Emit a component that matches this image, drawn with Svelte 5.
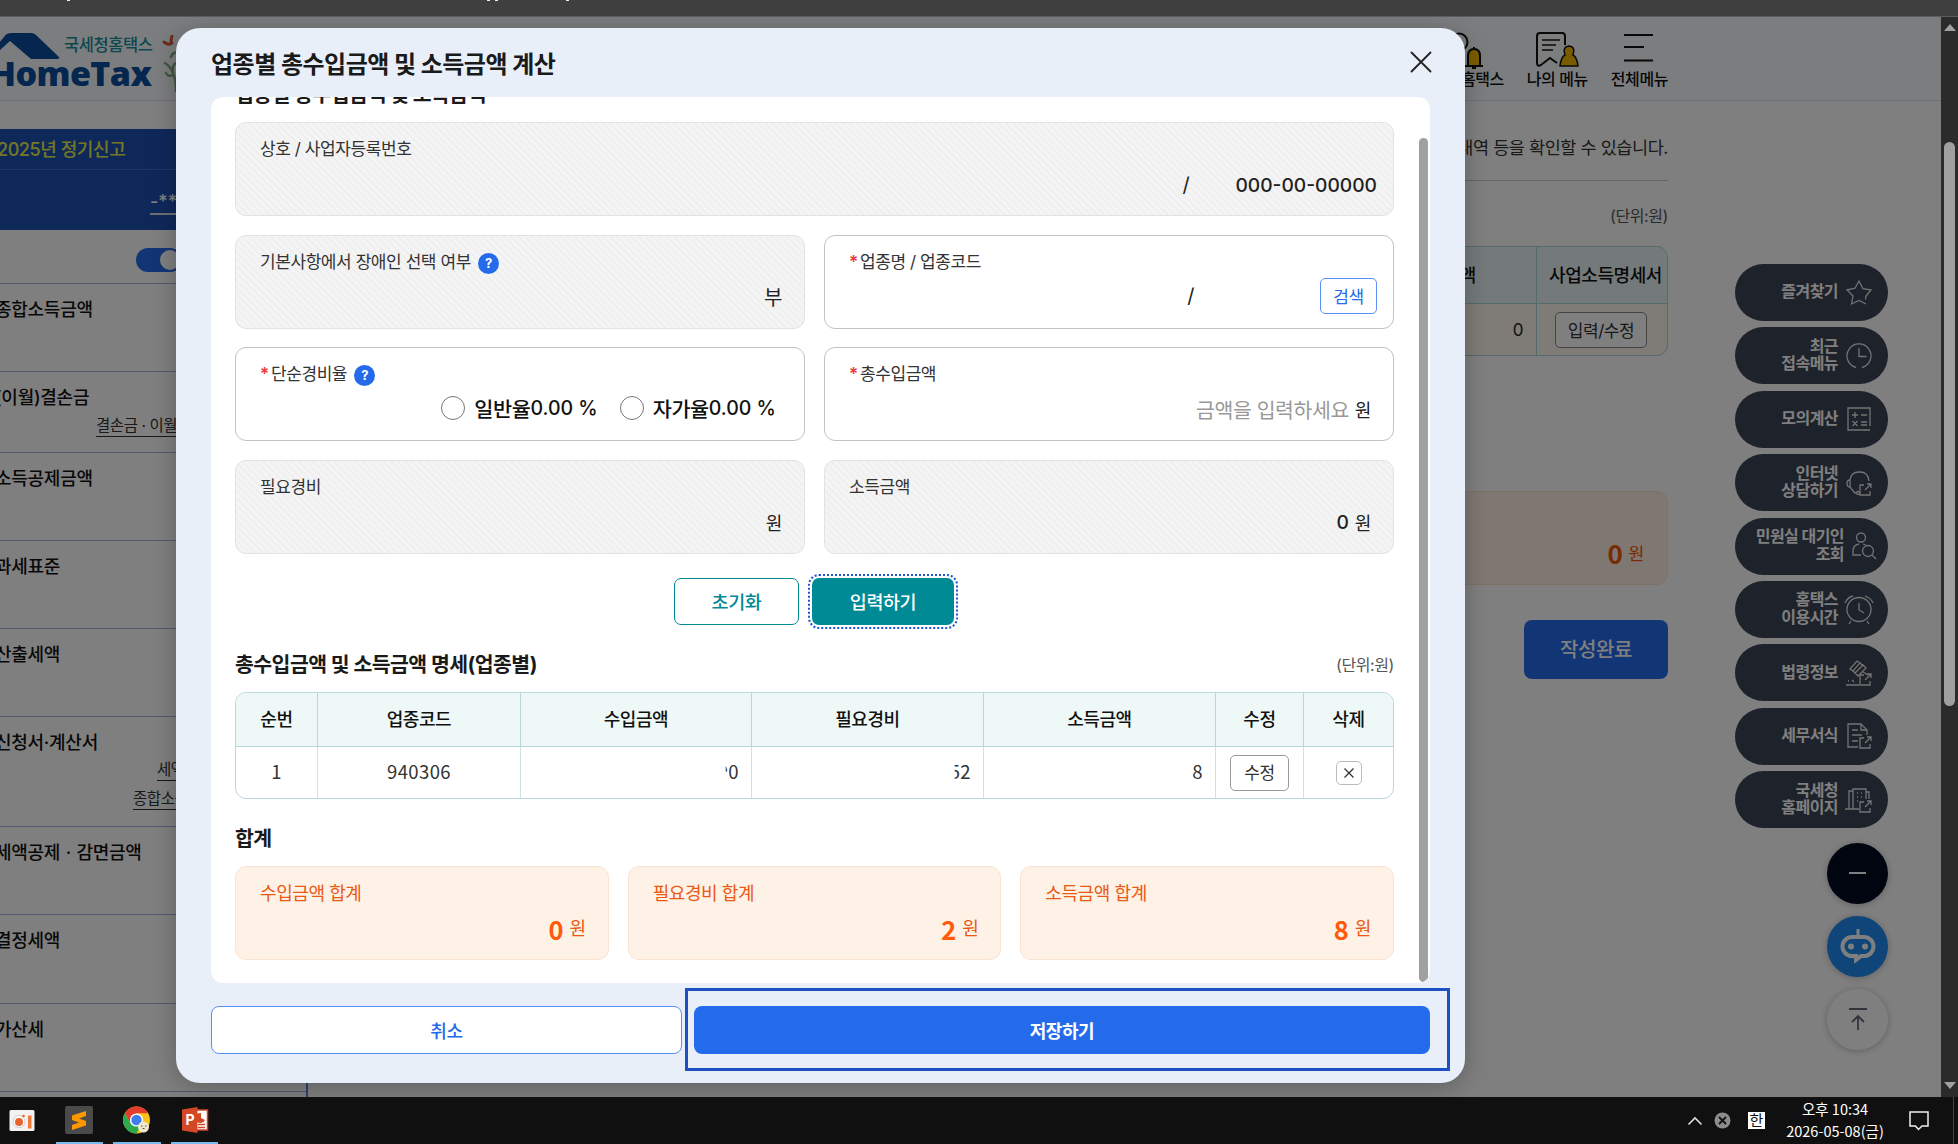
<script>
  const side = [
    { t: '종합소득금액', subs: [] },
    { t: '(이월)결손금', subs: ['결손금 · 이월결손금'] },
    { t: '소득공제금액', subs: [] },
    { t: '과세표준', subs: [] },
    { t: '산출세액', subs: [] },
    { t: '신청서·계산서', subs: ['세액감면신청서', '종합소득세 계산서'] },
    { t: '세액공제 · 감면금액', subs: [] },
    { t: '결정세액', subs: [] },
    { t: '가산세', subs: [] },
    { t: '', subs: [] }
  ];
  const quick = [
    ['즐겨찾기', 'star'],
    ['최근\n접속메뉴', 'recent'],
    ['모의계산', 'calc'],
    ['인터넷\n상담하기', 'head'],
    ['민원실 대기인\n조회', 'person'],
    ['홈택스\n이용시간', 'alarm'],
    ['법령정보', 'gavel'],
    ['세무서식', 'doc'],
    ['국세청\n홈페이지', 'bldg']
  ];
  const heads = ['순번', '업종코드', '수입금액', '필요경비', '소득금액', '수정', '삭제'];
  const sums = [
    ['수입금액 합계', '0'],
    ['필요경비 합계', '2'],
    ['소득금액 합계', '8']
  ];
</script>

{#snippet link()}
  <path d="M20 17h-4v10h10v-4M21 22l6-6M23 16h4v4" />
{/snippet}

{#snippet help()}
  <span class="help">?</span>
{/snippet}

<div class="screen">
  <div class="topbar"><i class="f1"></i><i class="f2"></i><i class="f3"></i><i class="f4"></i></div>
  <div class="view">
    <div class="page">
      <header class="gnb">
        <div class="logo">
          <svg class="roof" width="62" height="27" viewBox="0 0 62 27"><path d="M0 10 7 1.500Q9 0 12 0H32Q35 0 37 2L60 24Q61 26 58 26H32L11 8 0 18z" fill="#0a4d9c" /></svg>
          <span class="nts">국세청홈택스</span>
          <span class="ht">HomeTax</span>
          <svg class="leaf" width="20" height="60" viewBox="0 0 20 60"><g fill="none" stroke-linecap="round"><path d="M2 7q5 4 8 1M9 8q0-5 1-7" stroke="#d8593a" stroke-width="3" /><path d="M14 56Q14 35 3 28M12 40q-7 2-8-2M11 36q-1-6 3-8M9 22q2-6 8-4" stroke="#7fae83" stroke-width="2.500" /></g></svg>
        </div>
        <nav class="gmenu">
          <div class="gm g1">
            <svg width="40" height="40" viewBox="0 0 40 40" fill="none" stroke="#111" stroke-width="2"><circle cx="10" cy="10" r="8.500" /><path d="M19 34V24q0-7 6-7t6 7v10z" fill="#f5b800" /><path d="M16 34h18M23 36h4M25 17v-2" /></svg>
            <span>My홈택스</span>
          </div>
          <div class="gm g2">
            <svg width="46" height="40" viewBox="0 0 46 40" fill="none" stroke="#111" stroke-width="2"><path d="M31 13V4q0-3-3-3H6Q3 1 3 4v27q0 4 4 2l9-7 7 5" /><path d="M8 8h18M8 13h14M8 18h11" stroke-width="1.600" /><path d="M31 23q-3-8 4-9 7 1 4 9 4 2 5 11H26q1-9 5-11z" fill="#f5b800" stroke-width="1.500" /></svg>
            <span>나의 메뉴</span>
          </div>
          <div class="gm g3">
            <svg width="30" height="40" viewBox="0 0 30 40" stroke="#111" stroke-width="2.200"><path d="M0 3h29M0 15h20M0 28.500h29" /></svg>
            <span>전체메뉴</span>
          </div>
        </nav>
      </header>

      <div class="body">
        <aside>
          <div class="s-title">2025년 정기신고</div>
          <div class="s-user"><span>-*******</span></div>
          <div class="s-toggle"><span><i></i></span></div>
          {#each side as s, i}
            <div class="s-item s{i}">
              <b>{s.t}</b>
              {#each s.subs as u}<em>{u}</em>{/each}
            </div>
          {/each}
        </aside>
        <main>
          <p class="desc">신고내역 등을 확인할 수 있습니다.</p>
          <p class="unit">(단위:원)</p>
          <div class="ptable">
            <div class="ph"><span>소득금액</span><span>사업소득명세서</span></div>
            <div class="pr"><span>0</span><span><button>입력/수정</button></span></div>
          </div>
          <div class="ptotal"><b>0</b><span>원</span></div>
          <button class="done">작성완료</button>
        </main>
      </div>

      <div class="quick">
        {#each quick as [t, k]}
          <div class="pill {k}">
            <span>{t}</span>
            <svg width="30" height="30" viewBox="0 0 30 30" fill="none" stroke="#e6e6e6" stroke-width="1.300">
              {#if k === 'star'}
                <path d="M21.500 21.500 22 18l5-6-8-1.300L15 3l-4 7.200L3 12l6 6-1.500 8L15 22.500l7 3.500" />
              {:else if k === 'recent'}
                <path d="M12 26.500A12 12 0 1 1 18 26.500M15 7v8.500h7.500" />
              {:else if k === 'calc'}
                <path d="M26 22V4H4v22h22M8 11h6M11 8v6M17 11h6M8.500 17l5 5M13.500 17l-5 5M17 18h6M17 21h6" />
              {:else if k === 'head'}
                <path d="M6 12q1-8 9-8h1q8 0 9 9M6 12v7q-3 0-3-3.500T6 12zM6 19l5 6h2" /><circle cx="14" cy="25" r="1.500" />{@render link()}
              {:else if k === 'person'}
                <circle cx="14" cy="6.500" r="4.500" /><path d="M14 24H6v-4q0-6 6-7M16 13l3 1" /><circle cx="21" cy="20" r="5.500" /><path d="m25 24 4 4" />
              {:else if k === 'alarm'}
                <circle cx="15" cy="15.500" r="12" /><path d="M15 9v7l5 3M1 9Q4 3 9 2M21 2q6 2 8 7M7 27l-2 3M23 27l2 3" />
              {:else if k === 'gavel'}
                <path d="m6 11 7-8 3 2-7 8zM11 15l8-8 3 3-8 8zM9 13l2 2M16 5l3 3M19 14l5 3M8 22l2 2M4 23h1M2 27h13" />{@render link()}
              {:else if k === 'doc'}
                <path d="M14 26H4V3h13l6 6v5M17 3v6h6M8 9h6M8 14h10M8 20h6" />{@render link()}
              {:else}
                <path d="M1 24h14M5 24V6h4M9 24V4h13v10M22 7h3v7M13 8h1M17 8h1M13 12h1M17 12h1M13 16h1" />{@render link()}
              {/if}
            </svg>
          </div>
        {/each}
        <div class="round dark"><svg width="18" height="4"><path d="M0 2h17" stroke="#fff" stroke-width="2" /></svg></div>
        <div class="round blue">
          <svg width="36" height="34" viewBox="0 0 36 34"><path d="M18 1v7" stroke="#fff" stroke-width="3" stroke-linecap="round" /><path fill="none" stroke="#fff" stroke-width="4" d="M12 8h12a9 9 0 0 1 0 19h-3l-5 4v-4h-4a9 9 0 0 1 0-19z" /><circle cx="11" cy="17.500" r="3" fill="#fff" /><circle cx="25" cy="17.500" r="3" fill="#fff" /></svg>
        </div>
        <div class="round gray"><svg width="20" height="24" viewBox="0 0 20 24" fill="none" stroke="#667" stroke-width="1.800"><path d="M1 2h18M10 23V9M4 15l6-6 6 6" /></svg></div>
      </div>

      <div class="dim"></div>

      <section class="modal">
        <div class="m-head">
          <h1>업종별 총수입금액 및 소득금액 계산</h1>
          <svg width="22" height="22" viewBox="0 0 22 22" stroke="#222" stroke-width="1.800" stroke-linecap="round"><path d="m1.500 1.500 19 19M20.500 1.500l-19 19" /></svg>
        </div>
        <div class="m-body">
          <h2 class="cut">업종별 총수입금액 및 소득금액</h2>
          <div class="grid">
            <div class="card off wide">
              <label>상호 / 사업자등록번호</label>
              <div class="val biz"><span>/</span><span class="num">000-00-00000</span></div>
            </div>
            <div class="card off">
              <label>기본사항에서 장애인 선택 여부 {@render help()}</label>
              <div class="val">부</div>
            </div>
            <div class="card">
              <label><i>*</i>업종명 / 업종코드</label>
              <div class="val find"><span>/</span><button>검색</button></div>
            </div>
            <div class="card">
              <label><i>*</i>단순경비율 {@render help()}</label>
              <div class="val radios"><span class="rd"></span>일반율<b>0.00 %</b><span class="rd"></span>자가율<b>0.00 %</b></div>
            </div>
            <div class="card">
              <label><i>*</i>총수입금액</label>
              <div class="val"><span class="ph2">금액을 입력하세요</span><small>원</small></div>
            </div>
            <div class="card off">
              <label>필요경비</label>
              <div class="val"><small>원</small></div>
            </div>
            <div class="card off">
              <label>소득금액</label>
              <div class="val"><span class="num">0</span><small>원</small></div>
            </div>
          </div>
          <div class="acts"><button class="reset">초기화</button><button class="enter">입력하기</button></div>
          <div class="t-head"><h2>총수입금액 및 소득금액 명세(업종별)</h2><span>(단위:원)</span></div>
          <div class="table">
            {#each heads as h}<div class="th">{h}</div>{/each}
            <div class="td">1</div>
            <div class="td">940306</div>
            <div class="td r"><span class="c0">90</span></div>
            <div class="td r"><span class="c1">52</span></div>
            <div class="td r">8</div>
            <div class="td act"><button class="edit">수정</button></div>
            <div class="td act"><button class="del" aria-label="삭제"><svg width="10" height="10" viewBox="0 0 10 10" stroke="#333" stroke-width="1.300"><path d="m.5.500 9 9M9.500.500l-9 9" /></svg></button></div>
          </div>
          <h2 class="sum-title">합계</h2>
          <div class="sums">
            {#each sums as [l, v]}
              <div class="sum"><span>{l}</span><div><b>{v}</b><small>원</small></div></div>
            {/each}
          </div>
          <div class="m-scroll"></div>
        </div>
        <div class="m-foot">
          <button class="cancel">취소</button><button class="save">저장하기</button>
          <div class="focus"></div>
        </div>
      </section>
    </div>
    <div class="sbar">
      <svg width="12" height="7"><path d="M6 0l6 7H0z" fill="#a0a0a0" /></svg>
      <div class="thumb"></div>
      <svg width="12" height="7"><path d="M6 7l6-7H0z" fill="#a0a0a0" /></svg>
    </div>
  </div>

  <footer class="taskbar">
    <div class="apps">
      <div class="app"><svg width="28" height="28" viewBox="0 0 28 28"><rect x="1.500" y="4" width="25" height="21" rx="1.500" fill="#f4f2f1" /><circle cx="11" cy="15.500" r="6" fill="#fff" stroke="#ccc" /><circle cx="11" cy="16" r="4" fill="#e8632d" /><rect x="20" y="9.500" width="3.500" height="13" fill="#ee7a3c" /><circle cx="15.500" cy="10" r="1.300" fill="#e8632d" /></svg></div>
      <div class="app on"><svg width="28" height="28" viewBox="0 0 28 28"><rect width="28" height="28" rx="2" fill="#4a4a4a" /><path d="M7 9.500 21 5v5l-7 2.500 7 2.500v4.500L7 24v-5l7-2.500L7 14z" fill="#ff9800" /></svg></div>
      <div class="app on"><svg width="29" height="28" viewBox="0 0 28 28"><circle cx="14" cy="14" r="13.500" fill="#fbc116" /><path d="M2.300 7.250a13.500 13.500 0 0 1 23.400 0H14L8 17z" fill="#e33b2e" /><path d="M2.300 7.250A13.500 13.500 0 0 0 14 27.500L19.800 17.500 8.200 17.500z" fill="#2da94f" /><circle cx="14" cy="14" r="6.600" fill="#fff" /><circle cx="14" cy="14" r="5.200" fill="#3d7df0" /><circle cx="21" cy="21" r="5.500" fill="#f0e8cf" /><path d="M18.500 20h1.500M22.500 20h1.500M20 22.500h2" stroke="#554" /></svg></div>
      <div class="app on"><svg width="28" height="28" viewBox="0 0 28 28"><path d="M13 4h13.500v20H13z" fill="#fff" stroke="#d24726" stroke-width="1.500" /><path d="M20 12V7a5 5 0 1 0 4 7z" fill="#d24726" /><path d="M17 18.500h7M17 21.500h7" stroke="#d24726" stroke-width="1.400" /><path d="M1 3.500 16.500 1v26L1 24.500z" fill="#d24726" /><text x="4.500" y="19" font-size="14" font-weight="700" fill="#fff" font-family="Inter">P</text></svg></div>
    </div>
    <div class="tray">
      <svg width="16" height="10" viewBox="0 0 16 10" fill="none" stroke="#ddd" stroke-width="1.600"><path d="m1.500 8.500 6.500-6.500 6.500 6.500" /></svg>
      <svg class="off-ic" width="17" height="17" viewBox="0 0 17 17"><circle cx="8.500" cy="8.500" r="8" fill="#8c8c8c" /><path d="m5 5 7 7M12 5l-7 7" stroke="#111" stroke-width="1.800" /></svg>
      <span class="ime">한</span>
      <div class="clock"><span>오후 10:34</span><span>2026-05-08(금)</span></div>
      <svg class="note" width="20" height="20" viewBox="0 0 20 20" fill="none" stroke="#eee" stroke-width="1.500"><path d="M1 1h18v14h-6l-3.500 3.500L6.500 15H1z" /></svg>
    </div>
  </footer>
</div>

<style>
  :global(body) { overflow: hidden; }
  * { box-sizing: border-box; }
  .screen { width: 1958px; height: 1144px; display: flex; flex-direction: column; overflow: hidden; font-family: Inter, 'Noto Sans CJK KR', sans-serif; font-size: 17px; letter-spacing: -0.025em; color: #222; }
  h1, h2, p { margin: 0; }
  button { font-family: inherit; letter-spacing: inherit; margin: 0; padding: 0 0 2px; display: flex; align-items: center; justify-content: center; }
  .topbar { height: 17px; background: #404040; border-bottom: 1px solid #5c5c5c; position: relative; flex: none; }
  .topbar i { position: absolute; top: 0; width: 3px; height: 1px; background: #eee; }
  .f1 { left: 67px; } .f2 { left: 487px; } .f3 { left: 495px; } .f4 { left: 566px; }
  .view { display: flex; height: 1080px; flex: none; }
  .page { position: relative; width: 1941px; height: 1080px; overflow: hidden; background: #fff; }
  .sbar { width: 17px; background: #2b2b2b; display: flex; flex-direction: column; align-items: center; padding: 7px 0 8px; justify-content: space-between; }
  .thumb { width: 11px; height: 564px; margin-top: -265px; background: #9f9f9f; border-radius: 6px; }

  .gnb { height: 84px; background: #f9fbff; border-bottom: 1px solid #dde2ee; display: flex; justify-content: space-between; }
  .logo { position: relative; width: 180px; }
  .roof { position: absolute; left: -1px; top: 16px; }
  .nts { position: absolute; left: 64px; top: 18px; font-size: 16.500px; line-height: 20px; font-weight: 500; color: #1b8f9c; white-space: nowrap; }
  .ht { position: absolute; left: -10px; top: 38px; font: 800 34px/36px 'Open Sans', sans-serif; letter-spacing: -0.6px; color: #0a4d9c; }
  .leaf { position: absolute; left: 162px; top: 18px; }
  .gmenu { display: flex; padding: 15px 273px 0 0; font-size: 16px; font-weight: 500; color: #111; gap: 23px; }
  .gm { display: flex; flex-direction: column; align-items: center; line-height: 24px; white-space: nowrap; }
  .gm span { margin-top: -5px; }
  .g1 svg { margin-left: -4px; }

  .body { display: flex; justify-content: space-between; }
  aside { width: 308px; height: 997px; padding-top: 28px; border-right: 2px solid #5a86e0; font-size: 18px; }
  .s-title { height: 41px; line-height: 42px; background: #1f50b4; color: #e9f04a; font-weight: 500; border-bottom: 1px solid #3c6ed0; text-indent: -3px; }
  .s-user { height: 60px; background: #1f50b4; color: #fff; padding: 21px 0 0 150px; letter-spacing: 0; }
  .s-user span { border-bottom: 2px solid #d8dce8; line-height: 22px; display: inline-block; font-weight: 500; }
  .s-toggle { height: 54px; padding: 18px 0 0 136px; border-bottom: 1px solid #a3b5e0; }
  .s-toggle span { display: flex; justify-content: flex-end; width: 46px; height: 24px; border-radius: 12px; background: #246beb; padding: 2px; }
  .s-toggle i { width: 20px; height: 20px; border-radius: 50%; background: #fff; }
  .s-item { border-bottom: 1px solid #a3b5e0; padding-top: 12px; height: 88.100px; display: flex; flex-direction: column; color: #111; }
  .s-item b { line-height: 28px; font-weight: 500; margin-left: -5px; white-space: nowrap; letter-spacing: -0.015em; word-spacing: 1px; }
  .s-item em { font-style: normal; align-self: flex-start; font-size: 15.500px; line-height: 21px; border-bottom: 1px solid #333; margin-left: 96px; color: #333; white-space: nowrap; }
  .s1 { height: 81px; } .s1 em { margin-top: 3px; }
  .s5 { height: 110px; } .s5 em { margin: 2px 0 5px 157px; } .s5 em:last-child { margin-left: 133px; }

  main { width: 500px; margin-right: 273px; display: flex; flex-direction: column; align-items: flex-end; }
  .desc { height: 80px; width: 100%; border-bottom: 1px solid #ccc; text-align: right; line-height: 93px; white-space: nowrap; color: #333; font-size: 17.500px; }
  .unit { font-size: 16px; color: #555; line-height: 24px; margin-top: 23px; }
  .ptable { width: 500px; height: 110px; margin-top: 18px; border: 1px solid #a9d5d6; border-radius: 11px; overflow: hidden; background: #fef7ec; }
  .ph, .pr { display: grid; grid-template-columns: 367px 133px; height: 57px; border-bottom: 1px solid #a9d5d6; background: #e8f5f5; }
  .pr { background: none; border: 0; height: 52px; }
  .ph span { display: flex; align-items: center; justify-content: center; font-weight: 500; color: #111; white-space: nowrap; font-size: 18px; padding-bottom: 2px; }
  .ph span:first-child { justify-content: flex-end; padding-right: 60px; }
  .ph span:last-child, .pr span:last-child { border-left: 1px solid #a9d5d6; padding-left: 5px; }
  .pr span { display: flex; align-items: center; justify-content: flex-end; padding-right: 13px; }
  .pr span:last-child { justify-content: center; padding: 0 4px 0 0; }
  .pr button { width: 92px; height: 36px; border: 1px solid #888; border-radius: 5px; background: #fff; font-size: 17px; color: #333; }
  .ptotal { width: 500px; height: 94px; margin-top: 135px; border-radius: 11px; background: #fef1e5; border: 1px solid #f9e2cd; display: flex; justify-content: flex-end; align-items: center; gap: 6px; padding: 29px 23px 0 0; color: #f2560d; }
  .ptotal b { font: 700 26px 'Noto Sans CJK KR', sans-serif; }
  .ptotal span { font-size: 17.500px; }
  .done { margin-top: 35px; width: 144px; height: 59px; border: 0; border-radius: 8px; background: #246beb; color: #fff; font-size: 20px; font-weight: 500; }

  .quick { position: absolute; left: 1735px; top: 247px; display: flex; flex-direction: column; align-items: flex-end; width: 153px; }
  .pill { width: 153px; height: 57px; margin-bottom: 6.400px; border-radius: 29px; background: #3a4456; display: flex; align-items: center; justify-content: flex-end; gap: 6px; padding-right: 14px; }
  .pill span { color: #fff; font-size: 16px; line-height: 17.500px; white-space: pre; text-align: right; font-weight: 700; margin-top: -1px; letter-spacing: -0.035em; }
  .pill.person { gap: 3px; padding-right: 11px; }
  .round { width: 61px; height: 61px; border-radius: 50%; display: grid; place-items: center; box-shadow: 0 1px 7px rgba(0,0,0,.25); margin-bottom: 12px; }
  .dark { background: #000a20; margin-top: 8px; }
  .blue { background: #1f8bf3; }
  .gray { background: #fff; }
  .dim { position: absolute; inset: 0; background: rgba(0,0,0,.5); }

  .modal { position: absolute; left: 176px; top: 11px; width: 1289px; height: 1055px; border-radius: 24px; background: #e8eff9; padding: 0 35px; box-shadow: 0 4px 24px rgba(0,0,0,.25); display: flex; flex-direction: column; }
  .m-head { height: 69px; flex: none; display: flex; justify-content: space-between; align-items: center; }
  h1 { font-size: 24px; font-weight: 700; color: #1a1a1a; line-height: 32px; padding-top: 4px; letter-spacing: -0.021em; }
  .m-head svg { margin: -2px -2px 0 0; }
  .m-body { position: relative; height: 886px; flex: none; background: #fff; border-radius: 12px; overflow: hidden; padding: 0 36px 0 24px; }
  h2 { font-size: 20.500px; font-weight: 700; color: #1a1a1a; line-height: 26px; letter-spacing: -0.027em; }
  .cut { height: 25px; margin-top: -15px; line-height: 26px; }
  .grid { display: grid; grid-template-columns: 1fr 1fr; gap: 18.700px 19px; grid-auto-rows: 94px; margin-top: 15px; }
  .card { border: 1px solid #c2c2c2; border-radius: 11px; padding: 13px 22px 0 24px; display: flex; flex-direction: column; position: relative; }
  .wide { grid-column: span 2; }
  .off { border-color: #e1e2e6; background: repeating-linear-gradient(45deg, #f4f4f4 0 3px, #ededed 4px 4.500px, #f4f4f4 5px); }
  label { line-height: 26px; font-size: 17px; color: #333; display: flex; align-items: center; white-space: pre; height: 26px; }
  label i { color: #f03b3b; font-style: normal; margin-right: 2px; width: 9px; font-weight: 600; }
  .help { display: grid; place-items: center; width: 21px; height: 21px; border-radius: 50%; background: #246beb; color: #fff; font-size: 13px; line-height: 21px; font-weight: 700; margin: 3px 0 0 3px; letter-spacing: 0; }
  .val { height: 43px; display: flex; align-items: center; justify-content: flex-end; font-size: 20px; color: #222; gap: 6px; }
  .val small { font-size: 18px; }
  .num { letter-spacing: 0; font-size: 19.200px; font-weight: 500; }
  .biz { gap: 46px; margin-right: -6px; height: 45px; }
  .find { gap: 126px; margin-right: -6px; }
  .find button { width: 57px; height: 36px; border: 1px solid #5a90f5; border-radius: 5px; color: #246beb; background: #fff; font-size: 17px; }
  .radios { gap: 0; margin-right: 6px; color: #111; font-weight: 500; height: 41px; font-size: 20.800px; }
  .radios b { font-weight: 500; letter-spacing: 0; font-size: 19.500px; }
  .rd { width: 24px; height: 24px; border: 1px solid #777; border-radius: 50%; margin: 0 9px 0 22px; }
  .ph2 { color: #999; font-size: 20.500px; }
  .acts { display: flex; justify-content: center; gap: 13px; margin-top: 24px; padding-right: 1px; }
  .acts button { height: 47px; border-radius: 7px; font-size: 18.500px; font-weight: 500; }
  .acts .reset { width: 125px; border: 1px solid #008a96; background: #fff; color: #008a96; }
  .acts .enter { width: 142px; border: 0; background: #008a96; color: #fff; outline: 2px dotted #1f55d8; outline-offset: 2px; }
  .t-head { display: flex; justify-content: space-between; align-items: center; margin-top: 27px; height: 26px; }
  .t-head span { font-size: 16px; color: #555; margin-top: -3px; }
  .table { margin-top: 14px; height: 107px; display: grid; grid-template-columns: 82px 203px 231px 232px 232px 88px 1fr; grid-template-rows: 54px 51px; border: 1px solid #b9d9dd; border-radius: 11px; overflow: hidden; }
  .th, .td { display: flex; align-items: center; justify-content: center; border-right: 1px solid #cbe3e5; }
  .th { background: #eef8f7; border-bottom: 1px solid #b5d8da; border-right-color: #b5d8da; font-weight: 500; color: #111; font-size: 18px; padding-bottom: 3px; }
  .th:nth-child(7), .td:last-child { border-right: 0; }
  .td { color: #333; font-family: 'Noto Sans CJK KR', sans-serif; font-size: 18.500px; letter-spacing: 0.4px; padding-bottom: 3px; }
  .act { padding-bottom: 0; letter-spacing: -0.025em; }
  .r { justify-content: flex-end; padding-right: 12px; }
  .c0 { clip-path: polygon(8px 0, 100% 0, 100% 100%, 11px 100%, 11px 52%, 8px 52%); } .c1 { clip-path: inset(0 0 0 5px); }
  .edit { width: 59px; height: 36px; border: 1px solid #999; border-radius: 5px; background: #fff; font-size: 17px; color: #333; }
  .del { width: 26px; height: 24px; border: 1px solid #bbb; border-radius: 5px; background: #fff; padding: 0; }
  .sum-title { margin-top: 27px; }
  .sums { display: grid; grid-template-columns: repeat(3, 1fr); gap: 19px; margin-top: 14px; }
  .sum { height: 94px; border: 1px solid #fae4d1; border-radius: 11px; background: #fef1e5; padding: 14px 22px 0 24px; color: #ea5a14; font-size: 18px; line-height: 26px; }
  .sum div { display: flex; justify-content: flex-end; align-items: center; gap: 6px; height: 44px; }
  .sum b { font: 700 25.500px 'Noto Sans CJK KR', sans-serif; color: #ff5a0a; letter-spacing: 0; margin-top: -2px; }
  .sum small { font-size: 18px; }
  .m-scroll { position: absolute; right: 2px; top: 41px; width: 9px; height: 844px; border-radius: 5px; background: #a0a0a0; }
  .m-foot { position: relative; display: flex; gap: 12px; padding-top: 23px; }
  .m-foot button { height: 48px; border-radius: 8px; font-size: 18px; font-weight: 500; padding-bottom: 1px; }
  .cancel { width: 471px; border: 1px solid #5a90f5; background: #fff; color: #246beb; }
  .m-foot .save { width: 736px; border: 0; background: #246beb; color: #fff; font-weight: 700; }
  .focus { position: absolute; left: 474px; top: 5px; width: 765px; height: 83px; border: 3px solid #1d50c4; }

  .taskbar { height: 47px; flex: none; background: #101010; display: flex; justify-content: space-between; }
  .apps { display: flex; gap: 10px; margin-left: -2px; }
  .app { width: 47.600px; display: flex; justify-content: center; align-items: center; border-bottom: 2px solid transparent; }
  .on { border-color: #76b9ed; }
  .tray { display: flex; align-items: center; color: #fff; padding-right: 4px; margin-right: 4px; border-right: 1px solid #444; }
  .off-ic { margin-left: 11px; }
  .ime { margin-left: 17px; width: 17px; height: 17px; background: #fff; color: #111; font-size: 15px; line-height: 17px; letter-spacing: 0; display: grid; place-items: center; }
  .clock { display: flex; flex-direction: column; align-items: center; width: 102px; margin: -2px 0 0 19px; font: 14.500px/21.500px 'Noto Sans CJK KR', sans-serif; letter-spacing: 0; white-space: nowrap; }
  .note { margin: 0 20px 0 23px; }
</style>
